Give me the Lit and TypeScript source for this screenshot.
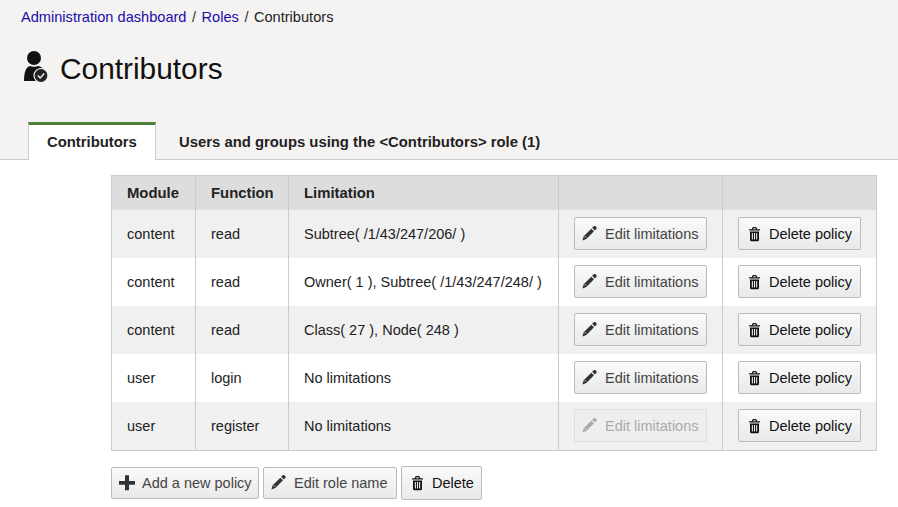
import { LitElement, html, css, svg } from "lit";
import { customElement } from "lit/decorators.js";

const pencil = svg`<g transform="translate(-1 -1) scale(1.04)"><path d="M12.200 1.200c.5-.5 1.100-.5 1.600 0l1 1c.5.5.5 1.100 0 1.600l-1.500 1.500-2.600-2.600zM9.900 3.500l2.600 2.600-7.300 7.300-3.900 1.400 1.300-4z"/><path d="M3.600 10.800l1.700 1.700" stroke="#f0f0f0" stroke-width=".7" fill="none"/></g>`;
const trash = svg`<path fill-rule="evenodd" d="M5.800 3.200l.5-1.400c.2-.5.500-.8 1.100-.8h2.200c.6 0 .9.300 1.100.8l.5 1.400h2.300c.3 0 .5.200.5.500v.8H3v-.8c0-.3.200-.5.500-.5zM7 3.200h3l-.4-1H7.400z"/><path fill-rule="evenodd" d="M4 5.500h9v8.300c0 .8-.5 1.400-1.300 1.400H5.300c-.8 0-1.300-.6-1.300-1.400zM5.800 7v6.500h1.100V7zM7.950 7v6.500h1.100V7zM10.100 7v6.500h1.100V7z"/>`;
const plus = svg`<path d="M6 0h4v6h6v4h-6v6H6v-6H0V6h6z" transform="translate(0 .3) scale(1 .94)"/>`;

const rows = [
  ["content", "read", "Subtree( /1/43/247/206/ )", false],
  ["content", "read", "Owner( 1 ), Subtree( /1/43/247/248/ )", false],
  ["content", "read", "Class( 27 ), Node( 248 )", false],
  ["user", "login", "No limitations", false],
  ["user", "register", "No limitations", true],
] as const;

@customElement("app-root")
export class AppRoot extends LitElement {
  static styles = css`
    :host {
      display: block;
      width: 898px;
      height: 507px;
      overflow: hidden;
      background: #fff;
      font-family: "Liberation Sans", Arial, sans-serif;
      font-size: 14.5px;
      color: #222;
    }
    .top {
      background: #f4f3f2;
      height: 159px;
      border-bottom: 1px solid #ccc;
      position: relative;
    }
    .crumbs {
      padding: 9px 0 0 21px;
      line-height: 16px;
      font-size: 14.6px;
      display: flex;
      color: #222;
    }
    .crumbs a { color: #1a0dab; text-decoration: none; }
    .crumbs .sep { padding: 0 5.5px; color: #333; }
    .title {
      display: flex;
      align-items: center;
      margin: 0;
      padding: 27px 0 0 24px;
      font-size: 29.85px;
      font-weight: 400;
      line-height: 34px;
      color: #111;
    }
    .title svg { width: 24px; height: 32px; margin: -6px 12px 0 0; display: block; }
    .tabs {
      display: flex;
      position: absolute;
      left: 28px;
      top: 122px;
      height: 38px;
      font-weight: 700;
      font-size: 14.85px;
      color: #222;
    }
    .tab {
      padding: 3px 0 0 23px;
      line-height: 35px;
      box-sizing: border-box;
      height: 38px;
      white-space: nowrap;
    }
    .tab.active {
      width: 128px;
      padding: 0 0 0 18px;
      background: #fff;
      border: 1px solid #ccc;
      border-top: 3px solid #4d7f35;
      border-bottom: none;
    }
    .main { padding: 15px 21px 0 111px; }
    table {
      border-collapse: collapse;
      width: 765px;
      table-layout: fixed;
      border: 1px solid #ccc;
      color: #222;
    }
    th, td {
      padding: 0 15px;
      text-align: left;
      border-left: 1px solid #ccc;
      white-space: nowrap;
    }
    th:first-child, td:first-child { border-left: none; }
    th { background: #ddd; height: 34px; font-weight: 700; font-size: 14.85px; }
    td { height: 48px; }
    td.cell-btn { height: 47px; line-height: 0; padding-bottom: 1px; }
    tbody tr:nth-child(odd) td { background: #f0f0f0; }
    .btn {
      display: inline-flex;
      align-items: center;
      vertical-align: top;
      box-sizing: border-box;
      height: 33px;
      padding: 0 7px;
      border: 1px solid #bbb;
      border-radius: 2px;
      background: linear-gradient(#fafafa, #e9e9e9);
      color: #444;
      font: inherit;
      line-height: normal;
      white-space: nowrap;
    }
    .btn svg { width: 16px; height: 16px; fill: #333; margin-right: 7px; flex: none; }
    .btn.dark { color: #111; }
    .btn.dark svg { fill: #111; }
    .btn.off { color: #aaa; border-color: #ddd; background: #eee; }
    .btn.off svg { fill: #aaa; }
    .edit { width: 133px; }
    .del { width: 123px; }
    .actions {
      display: flex;
      align-items: center;
      gap: 4px;
      margin-top: 15px;
    }
    .add { width: 148px; height: 32px; }
    .rename { width: 134px; height: 32px; }
    .remove { width: 81px; height: 34px; }
  `;

  render() {
    return html`
      <div class="top">
        <nav class="crumbs">
          <a>Administration dashboard</a><span class="sep">/</span><a>Roles</a><span class="sep">/</span><span>Contributors</span>
        </nav>
        <h1 class="title">
          <svg viewBox="0 0 24 32" fill="#111">
            <circle cx="10" cy="8" r="7"/>
            <path d="M0 31c0-9 2-14 6-15 2 1 6 1 8 0 3 .5 5 2 6 4l-8 11z"/>
            <circle cx="17" cy="25.500" r="7" fill="#222" stroke="#f4f3f2" stroke-width="1.200"/>
            <path d="M13.800 25.500l2.400 2.500 4-4.500" fill="none" stroke="#f4f3f2" stroke-width="1.400"/>
          </svg>
          Contributors
        </h1>
        <div class="tabs">
          <div class="tab active">Contributors</div>
          <div class="tab">Users and groups using the &lt;Contributors&gt; role (1)</div>
        </div>
      </div>
      <div class="main">
        <table>
          <colgroup>
            <col style="width:84px" /><col style="width:93px" /><col style="width:270px" /><col style="width:164px" /><col style="width:154px" />
          </colgroup>
          <thead>
            <tr><th>Module</th><th>Function</th><th>Limitation</th><th></th><th></th></tr>
          </thead>
          <tbody>
            ${rows.map(
              (r) => html`<tr>
                <td>${r[0]}</td><td>${r[1]}</td><td>${r[2]}</td>
                <td class="cell-btn"><span class="btn edit ${r[3] ? "off" : ""}"><svg viewBox="0 0 16 16">${pencil}</svg>Edit limitations</span></td>
                <td class="cell-btn"><span class="btn dark del"><svg viewBox="0 0 16 16">${trash}</svg>Delete policy</span></td>
              </tr>`
            )}
          </tbody>
        </table>
        <div class="actions">
          <span class="btn add"><svg viewBox="0 0 16 16">${plus}</svg>Add a new policy</span>
          <span class="btn rename"><svg viewBox="0 0 16 16">${pencil}</svg>Edit role name</span>
          <span class="btn dark remove"><svg viewBox="0 0 16 16">${trash}</svg>Delete</span>
        </div>
      </div>
    `;
  }
}
